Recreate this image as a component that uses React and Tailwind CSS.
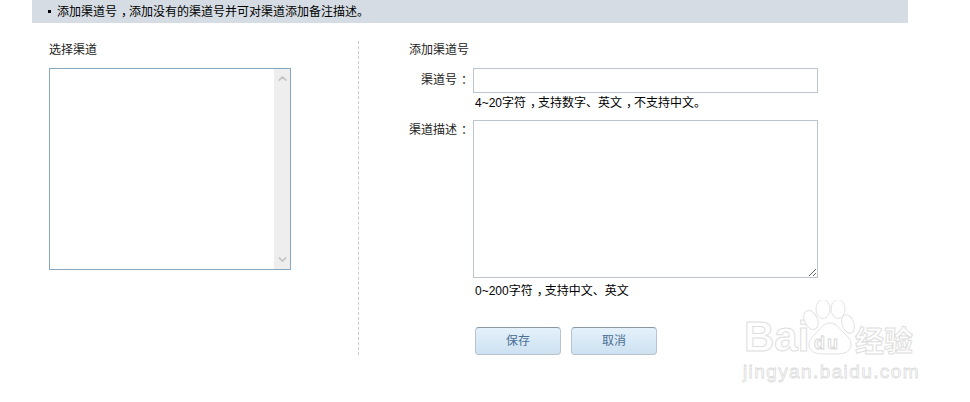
import { ChevronUp, ChevronDown } from "lucide-react";

// fullwidth punctuation sits centred in the cell in the original font
const Mark = ({ children }) => (
  <span className="inline-block pl-[4px] pr-[2px] [font-feature-settings:'halt']">{children}</span>
);

function Watermark() {
  return (
    <div className="absolute left-[744px] top-[300px] w-[190px] h-[84px] select-none">
      <div className="flex items-start h-[56px]">
        <span className="w-[59px] mt-[19px] text-[42px] leading-[36px] font-bold text-white [-webkit-text-stroke:1px_#dedede] [font-family:'Liberation_Sans',sans-serif]">
          Bai
        </span>
        <svg width="54" height="56" viewBox="0 0 54 56" fill="white" stroke="#e2e2e2" strokeWidth="1">
          <ellipse cx="8" cy="20" rx="6.5" ry="10" transform="rotate(-25 8 20)" />
          <ellipse cx="20" cy="9" rx="7" ry="9.5" />
          <ellipse cx="35" cy="9" rx="7" ry="9.5" />
          <ellipse cx="45" cy="24" rx="6" ry="9.5" transform="rotate(-20 45 24)" />
          <path d="M27 23c7 0 9 6 15 11 6 5 8 11 4 16-3 4-10 4-19 4s-16 0-19-4c-4-5-2-11 4-16 6-5 8-11 15-11z" />
          <text x="11" y="49" fontSize="18" fontWeight="700" letterSpacing="2" fill="white" stroke="#d6d6d6" strokeWidth="0.9" fontFamily="'Liberation Sans', sans-serif">
            du
          </text>
        </svg>
        <span className="mt-[22px] -ml-[2px] text-[29px] leading-[34px] font-bold text-white [-webkit-text-stroke:1px_#dedede] [font-family:'Noto_Sans_CJK_SC',sans-serif]">
          经验
        </span>
      </div>
      <div className="-ml-[1px] mt-[6px] text-[19px] leading-[20px] whitespace-nowrap text-white tracking-[1.4px] [-webkit-text-stroke:0.8px_#dcdcdc] [font-family:'Liberation_Sans',sans-serif]">
        jingyan.baidu.com
      </div>
    </div>
  );
}

export default function App() {
  return (
    <div className="relative w-[970px] h-[402px] overflow-hidden bg-white text-[12px] leading-[16px] text-[#222] [font-family:'Liberation_Sans','Noto_Sans_CJK_SC',sans-serif]">
      <div className="ml-[32px] w-[876px] h-[23px] bg-[#d5dce3] pl-[16px] flex items-center text-black">
        <span className="w-[3px] h-[3px] bg-black mr-[6px]"></span>
        <span>
          添加渠道号<Mark>，</Mark>添加没有的渠道号并可对渠道添加备注描述。
        </span>
      </div>

      <div className="flex mt-[18px]">
        <div className="ml-[49px] w-[309px] pt-[1px]">
          <div className="h-[16px]">选择渠道</div>
          <div className="mt-[10px] w-[242px] h-[202px] border border-[#87a7c0] flex justify-end">
            <div className="w-[16px] h-full bg-[#eeeeee] flex flex-col justify-between items-center py-[3px]">
              <ChevronUp size={13} strokeWidth={3} className="text-[#c4c4c4]" />
              <ChevronDown size={13} strokeWidth={3} className="text-[#c4c4c4]" />
            </div>
          </div>
        </div>

        <div className="h-[314px] border-l border-dashed border-[#c0ccd6]"></div>

        <div className="ml-[50px] pt-[1px]">
          <div className="h-[16px]">添加渠道号</div>
          <div className="flex mt-[10px]">
            <label className="w-[64px] text-right whitespace-nowrap pr-[4px] pt-[4px]">
              渠道号<Mark>：</Mark>
            </label>
            <input className="w-[345px] h-[25px] border border-[#bcc5cf] outline-none bg-white" />
          </div>
          <div className="ml-[66px] mt-[1px] h-[16px] pt-[1px] text-black">
            4~20字符<Mark>，</Mark>支持数字、英文<Mark>，</Mark>不支持中文。
          </div>
          <div className="flex mt-[10px]">
            <label className="w-[64px] text-right whitespace-nowrap pr-[4px] pt-[2px]">
              渠道描述<Mark>：</Mark>
            </label>
            <textarea className="block w-[345px] h-[158px] border border-[#bcc5cf] outline-none bg-white resize-y"></textarea>
          </div>
          <div className="ml-[66px] mt-[5px] h-[16px] text-black">
            0~200字符<Mark>，</Mark>支持中文、英文
          </div>
          <div className="ml-[66px] mt-[28px] flex gap-[10px]">
            <button className="w-[86px] h-[28px] rounded-[4px] border border-[#b7c3ce] border-t-[#8b97a3] bg-gradient-to-b from-[#e4f1fb] to-[#cde1f1] text-[#4a6f94]">
              保存
            </button>
            <button className="w-[86px] h-[28px] rounded-[4px] border border-[#b7c3ce] border-t-[#8b97a3] bg-gradient-to-b from-[#e4f1fb] to-[#cde1f1] text-[#4a6f94]">
              取消
            </button>
          </div>
        </div>
      </div>

      <Watermark />
    </div>
  );
}
